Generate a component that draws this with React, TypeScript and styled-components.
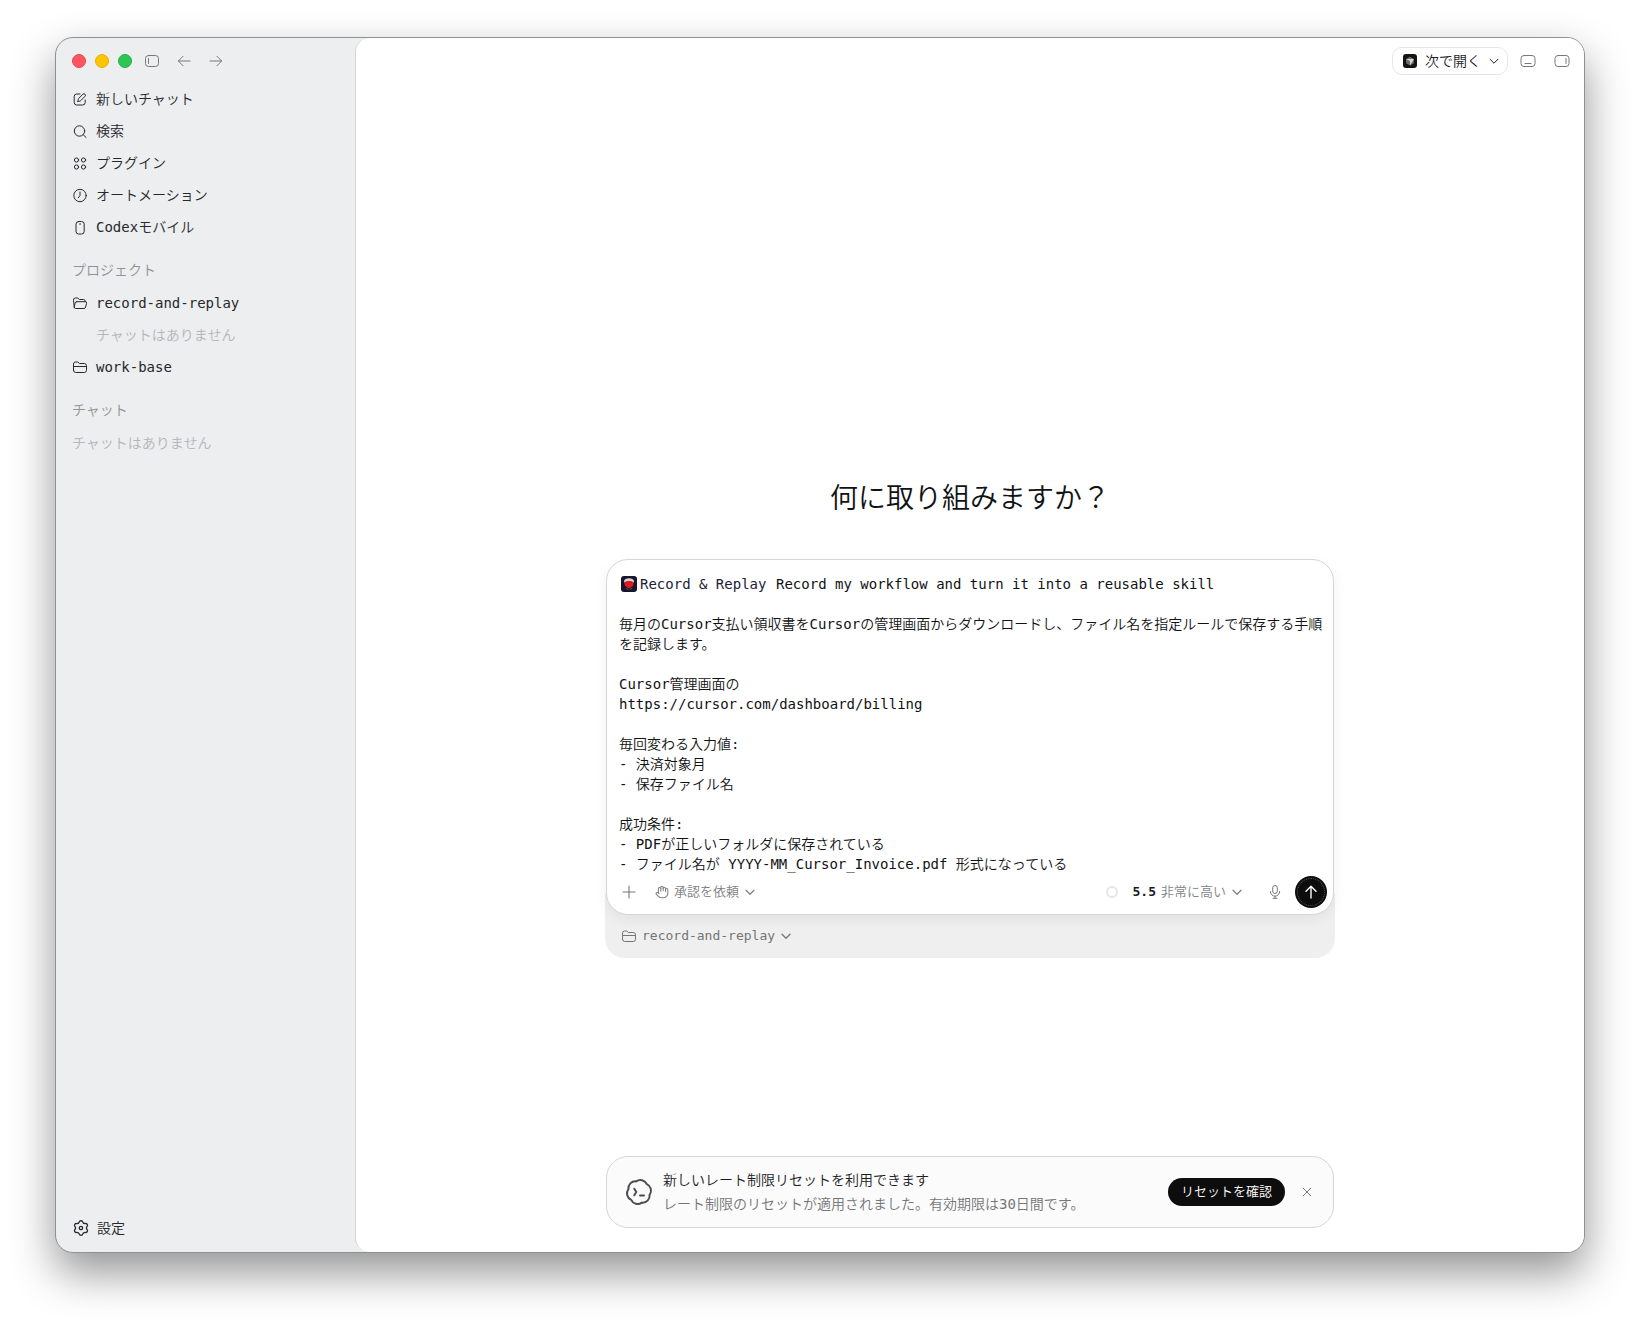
import React, { useState } from 'react';
import styled, { createGlobalStyle } from 'styled-components';

const GlobalStyle = createGlobalStyle`
  *, *::before, *::after { box-sizing: border-box; }
  body {
    margin: 0;
    background: #ffffff;
    color: #1a1c1f;
    font-family: "DejaVu Sans Mono", "Noto Sans CJK JP", monospace;
    font-size: 14px;
    line-height: 20px;
    font-weight: 350;
  }
  button, select, textarea {
    font: inherit;
    color: inherit;
    background: none;
    border: 0;
    padding: 0;
    margin: 0;
  }
  button { cursor: pointer; }
  svg { display: block; flex: none; }
`;

const Desktop = styled.div`
  min-height: 100vh;
  padding: 37px 55px 73px;
  display: flex;
  overflow: hidden;
`;

const AppWindow = styled.div`
  flex: 1;
  min-width: 0;
  display: grid;
  grid-template-columns: 299px minmax(0, 1fr);
  background: #edeef0;
  border: 1px solid #8f9091;
  border-radius: 18px;
  box-shadow: 0 20px 44px rgba(0, 0, 0, 0.42);
  overflow: hidden;
`;

const Sidebar = styled.aside`
  display: flex;
  flex-direction: column;
  padding: 0 8px 8px;
`;

const TitleBar = styled.div`
  height: 45px;
  padding: 0 8px;
  display: flex;
  align-items: center;
`;

const TrafficLights = styled.div`
  display: flex;
  gap: 9px;
  margin-right: 12px;
`;

const Light = styled.button<{ $fill: string; $edge: string }>`
  width: 14px;
  height: 14px;
  border-radius: 50%;
  background: ${(p) => p.$fill};
  border: 1px solid ${(p) => p.$edge};
`;

const IconButton = styled.button<{ $size?: number }>`
  width: ${(p) => p.$size ?? 16}px;
  height: ${(p) => p.$size ?? 16}px;
  display: flex;
  align-items: center;
  justify-content: center;
  color: #76787b;
`;

const WindowTools = styled.div`
  display: flex;
  gap: 16px;
`;

const NavList = styled.ul`
  list-style: none;
  margin: 0;
  padding: 0;
`;

const NavRow = styled.button`
  width: 100%;
  height: 32px;
  padding: 0 8px;
  display: flex;
  align-items: center;
  gap: 8px;
  border-radius: 8px;
  text-align: left;
  color: #26282b;
`;

const SectionTitle = styled.h2`
  margin: 11px 0 1px;
  padding: 6px 8px;
  font-size: 14px;
  line-height: 20px;
  font-weight: inherit;
  color: #919396;
`;

const EmptyNote = styled.p<{ $nested?: boolean }>`
  margin: 0;
  padding: 6px ${(p) => (p.$nested ? 32 : 8)}px;
  color: #b4b6b8;
`;

const SidebarFooter = styled.div`
  margin-top: auto;
  padding: 0 1px;
`;

const Main = styled.main`
  display: flex;
  flex-direction: column;
  background: #ffffff;
  border-left: 1px solid #d3d4d6;
  border-radius: 14px 0 0 14px;
`;

const MainHeader = styled.header`
  height: 46px;
  padding: 0 14px;
  display: flex;
  align-items: center;
  justify-content: flex-end;
  gap: 18px;
`;

const OpenInButton = styled.button`
  height: 28px;
  padding: 0 8px 0 10px;
  display: flex;
  align-items: center;
  gap: 8px;
  border: 1px solid #e6e6e6;
  border-radius: 10px;
  color: #1a1c1f;
  margin-right: -6px;
`;

const Stage = styled.div`
  flex: 1;
  padding: 0 24px 24px;
  display: grid;
  grid-template-columns: minmax(0, 730px);
  grid-template-rows: 2fr auto 1fr auto;
  justify-content: center;
`;

const Hero = styled.section`
  grid-row: 2;
`;

const Heading = styled.h1`
  margin: 0 0 40px;
  font-size: 28px;
  line-height: 40px;
  font-weight: inherit;
  text-align: center;
  color: #111214;
`;

const Composer = styled.form`
  position: relative;
  z-index: 1;
  margin: 0 1px;
  padding: 14px 8px 6px 12px;
  background: #ffffff;
  border: 1px solid #d6d6d6;
  border-radius: 22px;
  box-shadow: 0 4px 14px rgba(0, 0, 0, 0.06);
`;

const PromptArea = styled.div`
  position: relative;
`;

const SkillChip = styled.button`
  position: absolute;
  top: 0;
  left: 2px;
  display: flex;
  align-items: center;
  gap: 3px;
  color: #1d2038;
`;

const Prompt = styled.textarea`
  display: block;
  width: 100%;
  height: 300px;
  resize: none;
  outline: none;
  overflow: hidden;
  text-indent: 157px;
  color: #111214;
`;

const ComposerBar = styled.div`
  height: 32px;
  margin-top: 2px;
  display: flex;
  align-items: center;
  gap: 16px;
  font-size: 13px;
  color: #808285;
`;

const Picker = styled.div`
  display: flex;
  align-items: center;
  gap: 5px;
`;

const PickerSelect = styled.select`
  appearance: none;
  font-size: 13px;
  height: 20px;
  outline: none;
  cursor: pointer;
`;

const ModelName = styled.label`
  color: #1a1c1f;
  font-weight: 700;
`;

const BarEnd = styled.div`
  margin-left: auto;
  display: flex;
  align-items: center;
`;

const UsageRing = styled.span`
  width: 12px;
  height: 12px;
  margin-right: 15px;
  border: 2px solid #e6e6e6;
  border-radius: 50%;
`;

const MicSlot = styled.div`
  margin: 0 12px 0 25px;
`;

const SendButton = styled.button`
  width: 32px;
  height: 32px;
  margin-right: -2px;
  display: flex;
  align-items: center;
  justify-content: center;
  border-radius: 50%;
  background: #0d0d0d;
  color: #ffffff;
  outline: 1px dotted #5c5c5c;
  outline-offset: -3px;
`;

const Tray = styled.div`
  margin-top: -22px;
  padding: 33px 16px 12px;
  border-radius: 0 0 20px 20px;
  background: #efefef;
  font-size: 13px;
  color: #737577;
`;

const Banner = styled.section`
  grid-row: 4;
  margin: 0 1px;
  padding: 11px 18px;
  display: flex;
  align-items: center;
  background: #fbfbfb;
  border: 1px solid #d6d6d6;
  border-radius: 22px;
`;

const BannerIcon = styled.span`
  color: #4b4d50;
`;

const BannerText = styled.div`
  flex: 1;
  min-width: 0;
  margin-left: 10px;
`;

const BannerLine = styled.p<{ $muted?: boolean }>`
  margin: 0;
  line-height: 24px;
  color: ${(p) => (p.$muted ? '#737577' : '#1a1c1f')};
`;

const PillButton = styled.button`
  height: 28px;
  padding: 0 13px;
  margin-right: 14px;
  border-radius: 14px;
  background: #0d0d0d;
  color: #ffffff;
  font-size: 13px;
  white-space: nowrap;
`;

type IconProps = { size?: number; children: React.ReactNode; stroke?: number; box?: number };

const Icon = ({ size = 16, box = 16, stroke = 1, children }: IconProps) => (
  <svg
    width={size}
    height={size}
    viewBox={`0 0 ${box} ${box}`}
    fill="none"
    stroke="currentColor"
    strokeWidth={stroke}
    strokeLinecap="round"
    strokeLinejoin="round"
    aria-hidden="true"
  >
    {children}
  </svg>
);

const ChevronIcon = ({ stroke = 1.3 }: { stroke?: number }) => (
  <Icon size={10} box={10} stroke={stroke}>
    <path d="M1 3.2 5 7.2l4-4" />
  </Icon>
);

const SidebarIcon = () => (
  <Icon>
    <rect x="1.5" y="2.5" width="13" height="11" rx="3" />
    <path d="M4.5 5.5v5" />
  </Icon>
);

const BackIcon = () => (
  <Icon>
    <path d="M14 8H2.5M7 3.3 2.3 8 7 12.7" />
  </Icon>
);

const ForwardIcon = () => (
  <Icon>
    <path d="M2 8h11.5M9 3.3 13.7 8 9 12.7" />
  </Icon>
);

const BottomPanelIcon = () => (
  <Icon>
    <rect x="1" y="2.500" width="14" height="11" rx="3" />
    <path d="M5 10.500h6" />
  </Icon>
);

const RightPanelIcon = () => (
  <Icon>
    <rect x="1" y="2.500" width="14" height="11" rx="3" />
    <path d="M12 5.500v5" />
  </Icon>
);

const ComposeIcon = () => (
  <Icon>
    <path d="M8 3H4.7A2.500 2.500 0 0 0 2.200 5.500v6A2.500 2.500 0 0 0 4.700 14h6a2.500 2.500 0 0 0 2.500-2.500V9" />
    <path d="M6 10.400c0-1.800.3-2.600 1-3.300l3.900-3.900a1.450 1.450 0 0 1 2.100 2.100L9.200 9.200c-.8.800-1.500 1.200-3.200 1.200Z" />
  </Icon>
);

const SearchIcon = () => (
  <Icon>
    <circle cx="7.5" cy="8" r="5.2" />
    <path d="m11.3 11.8 2.700 2.600" />
  </Icon>
);

const PluginsIcon = () => (
  <Icon>
    <circle cx="4.500" cy="5" r="2.100" />
    <circle cx="11.500" cy="5" r="2.100" />
    <circle cx="4.500" cy="12" r="2.100" />
    <circle cx="11.500" cy="12" r="2.100" />
  </Icon>
);

const ClockIcon = () => (
  <Icon>
    <circle cx="8" cy="8.500" r="6.200" />
    <path d="M8 5v3.500L6.300 10.800" />
  </Icon>
);

const PhoneIcon = () => (
  <Icon>
    <rect x="4" y="2.500" width="8.200" height="12.500" rx="2.600" />
    <path d="M7.600 5h1" />
  </Icon>
);

const OpenFolderIcon = () => (
  <Icon>
    <path d="M2.300 12.500 1.500 5.200A2 2 0 0 1 3.400 3h2.400l1.600 1.500h4a2 2 0 0 1 2 2" />
    <path d="M4.600 6.700h8.600a1.300 1.300 0 0 1 1.300 1.700l-.9 3.700a1.800 1.800 0 0 1-1.700 1.400H3.700a1.500 1.500 0 0 1-1.400-1.900l.9-3.800a1.500 1.500 0 0 1 1.400-1.100Z" />
  </Icon>
);

const FolderIcon = () => (
  <Icon>
    <path d="M1.500 11.300V5A2 2 0 0 1 3.500 3h2.300l1.600 1.500h4.900a2.200 2.200 0 0 1 2.200 2.200v4.600a2.200 2.200 0 0 1-2.200 2.200H3.700a2.200 2.200 0 0 1-2.200-2.200Z" />
    <path d="M1.500 7.500h13" />
  </Icon>
);

const gearOutline = (() => {
  const at = (deg: number, r: number) => {
    const a = (deg * Math.PI) / 180;
    return `${(8 + r * Math.cos(a)).toFixed(2)} ${(8 + r * Math.sin(a)).toFixed(2)}`;
  };
  let d = `M${at(-102, 6.8)}`;
  for (let k = 0; k < 6; k += 1) {
    const tooth = -90 + k * 60;
    d += `Q${at(tooth, 7.8)} ${at(tooth + 12, 6.8)}Q${at(tooth + 30, 4.4)} ${at(tooth + 48, 6.8)}`;
  }
  return `${d}Z`;
})();

const GearIcon = () => (
  <Icon stroke={1.3}>
    <path d={gearOutline} />
    <circle cx="8" cy="8" r="1.700" />
  </Icon>
);

const PlusIcon = () => (
  <Icon stroke={1.1}>
    <path d="M8 2v12M2 8h12" />
  </Icon>
);

const HandIcon = () => (
  <Icon size={14} box={24} stroke={1.8}>
    <path d="M18 11V6a2 2 0 0 0-4 0" />
    <path d="M14 10V4a2 2 0 0 0-4 0v2" />
    <path d="M10 10.500V6a2 2 0 0 0-4 0v8" />
    <path d="M18 8a2 2 0 1 1 4 0v6a8 8 0 0 1-8 8h-2c-2.800 0-4.500-.860-5.990-2.340l-3.600-3.600a2 2 0 0 1 2.830-2.820L7 15" />
  </Icon>
);

const MicIcon = () => (
  <Icon>
    <rect x="5.700" y="1.500" width="4.600" height="8" rx="2.300" />
    <path d="M3.300 7.500a4.700 4.700 0 0 0 9.400 0M8 12.200v2M6 14.300h4" />
  </Icon>
);

const ArrowUpIcon = () => (
  <Icon stroke={1.4}>
    <path d="M8 14V2.500M3 7.300l5-5 5 5" />
  </Icon>
);

const CloseIcon = () => (
  <Icon size={10} box={10}>
    <path d="m1.200 1.200 7.600 7.600M8.800 1.200 1.200 8.800" />
  </Icon>
);

const TerminalBadgeIcon = () => (
  <Icon size={28} box={28} stroke={2}>
    <path d="M24.600 16.850A7 7 0 0 1 16.850 24.600 7 7 0 0 1 6.200 21.800 7 7 0 0 1 3.400 11.150 7 7 0 0 1 11.150 3.400 7 7 0 0 1 21.800 6.200 7 7 0 0 1 24.600 16.850Z" />
    <path d="m9.300 10.700 2 3.300-2 3.300M15 17.500h4" />
  </Icon>
);

const CursorAppIcon = () => (
  <svg width="14" height="14" viewBox="0 0 14 14" aria-hidden="true">
    <rect width="14" height="14" rx="3" fill="#14140f" />
    <path d="M7 2.800 10.900 5v4.300L7 11.400 3.100 9.300V5Z" fill="#6d6d6d" />
    <path d="M3.100 5h7.800L7 11.400V7Z" fill="#d6d6d6" />
  </svg>
);

const RecordAppIcon = () => (
  <svg width="16" height="16" viewBox="0 0 16 16" aria-hidden="true">
    <rect width="16" height="16" rx="3" fill="#14172a" />
    <path d="M3 5.500C3 1.200 13 1.200 13 5.500L12.500 7h-9Z" fill="#d9d2de" />
    <path d="M4 8.500c0 7 8 7 8 0l-.5 2.700L8 14l-3.500-2.800Z" fill="#8c7f8c" />
    <path d="M3.200 6 8 4.800 12.800 6l-.6 3.600L8 12.800 3.800 9.600Z" fill="#e3191d" />
    <path d="M5.200 6.300h1.200M9.600 6.300h1.200" stroke="#7d0d14" strokeWidth="1" />
  </svg>
);

const navItems = [
  { label: '新しいチャット', icon: <ComposeIcon /> },
  { label: '検索', icon: <SearchIcon /> },
  { label: 'プラグイン', icon: <PluginsIcon /> },
  { label: 'オートメーション', icon: <ClockIcon /> },
  { label: 'Codexモバイル', icon: <PhoneIcon /> },
];

const initialPrompt = `Record my workflow and turn it into a reusable skill

毎月のCursor支払い領収書をCursorの管理画面からダウンロードし、ファイル名を指定ルールで保存する手順を記録します。

Cursor管理画面の
https://cursor.com/dashboard/billing

毎回変わる入力値:
- 決済対象月
- 保存ファイル名

成功条件:
- PDFが正しいフォルダに保存されている
- ファイル名が YYYY-MM_Cursor_Invoice.pdf 形式になっている`;

export default function App() {
  const [prompt, setPrompt] = useState(initialPrompt);

  return (
    <>
      <GlobalStyle />
      <Desktop>
        <AppWindow>
          <Sidebar>
            <TitleBar>
              <TrafficLights>
                <Light type="button" aria-label="閉じる" $fill="#ff5560" $edge="#e9424e" />
                <Light type="button" aria-label="しまう" $fill="#fdc400" $edge="#e8b100" />
                <Light type="button" aria-label="拡大" $fill="#2ec553" $edge="#20b045" />
              </TrafficLights>
              <WindowTools>
                <IconButton type="button" aria-label="サイドバー"><SidebarIcon /></IconButton>
                <IconButton type="button" aria-label="戻る"><BackIcon /></IconButton>
                <IconButton type="button" aria-label="進む"><ForwardIcon /></IconButton>
              </WindowTools>
            </TitleBar>
            <nav>
              <NavList>
                {navItems.map((item) => (
                  <li key={item.label}>
                    <NavRow type="button">{item.icon}{item.label}</NavRow>
                  </li>
                ))}
              </NavList>
            </nav>
            <SectionTitle>プロジェクト</SectionTitle>
            <NavRow type="button"><OpenFolderIcon />record-and-replay</NavRow>
            <EmptyNote $nested>チャットはありません</EmptyNote>
            <NavRow type="button"><FolderIcon />work-base</NavRow>
            <SectionTitle>チャット</SectionTitle>
            <EmptyNote>チャットはありません</EmptyNote>
            <SidebarFooter>
              <NavRow type="button"><GearIcon />設定</NavRow>
            </SidebarFooter>
          </Sidebar>

          <Main>
            <MainHeader>
              <OpenInButton type="button">
                <CursorAppIcon />
                次で開く
                <ChevronIcon stroke={1} />
              </OpenInButton>
              <IconButton type="button" aria-label="下部パネル"><BottomPanelIcon /></IconButton>
              <IconButton type="button" aria-label="右パネル"><RightPanelIcon /></IconButton>
            </MainHeader>

            <Stage>
              <Hero>
                <Heading>何に取り組みますか？</Heading>
                <Composer onSubmit={(e) => e.preventDefault()}>
                  <PromptArea>
                    <Prompt
                      aria-label="プロンプト"
                      spellCheck={false}
                      value={prompt}
                      onChange={(e) => setPrompt(e.target.value)}
                    />
                    <SkillChip type="button"><RecordAppIcon />Record &amp; Replay</SkillChip>
                  </PromptArea>
                  <ComposerBar>
                    <IconButton type="button" aria-label="追加" $size={20}><PlusIcon /></IconButton>
                    <Picker>
                      <HandIcon />
                      <PickerSelect aria-label="承認モード"><option>承認を依頼</option></PickerSelect>
                      <ChevronIcon />
                    </Picker>
                    <BarEnd>
                      <UsageRing />
                      <Picker>
                        <ModelName htmlFor="effort">5.5</ModelName>
                        <PickerSelect id="effort"><option>非常に高い</option></PickerSelect>
                        <ChevronIcon />
                      </Picker>
                      <MicSlot>
                        <IconButton type="button" aria-label="音声入力"><MicIcon /></IconButton>
                      </MicSlot>
                      <SendButton type="submit" aria-label="送信"><ArrowUpIcon /></SendButton>
                    </BarEnd>
                  </ComposerBar>
                </Composer>
                <Tray>
                  <Picker>
                    <FolderIcon />
                    <PickerSelect aria-label="プロジェクト"><option>record-and-replay</option></PickerSelect>
                    <ChevronIcon />
                  </Picker>
                </Tray>
              </Hero>

              <Banner>
                <BannerIcon><TerminalBadgeIcon /></BannerIcon>
                <BannerText>
                  <BannerLine>新しいレート制限リセットを利用できます</BannerLine>
                  <BannerLine $muted>レート制限のリセットが適用されました。有効期限は30日間です。</BannerLine>
                </BannerText>
                <PillButton type="button">リセットを確認</PillButton>
                <IconButton type="button" aria-label="通知を閉じる"><CloseIcon /></IconButton>
              </Banner>
            </Stage>
          </Main>
        </AppWindow>
      </Desktop>
    </>
  );
}
